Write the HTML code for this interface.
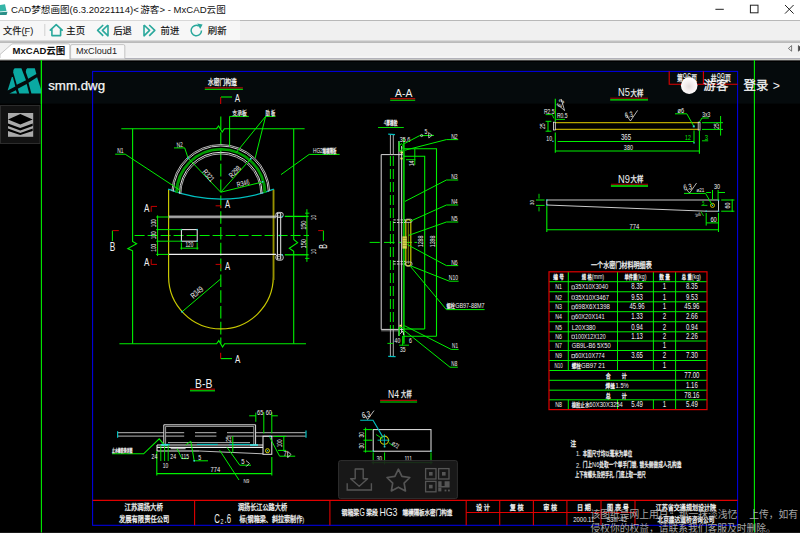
<!DOCTYPE html>
<html><head><meta charset="utf-8"><title>CAD</title>
<style>
html,body{margin:0;padding:0;background:#000;}
body{width:800px;height:533px;overflow:hidden;position:relative;font-family:"Liberation Sans","Noto Sans CJK SC",sans-serif;}
svg{display:block;position:absolute;left:0;top:0;}
svg text{font-family:"Liberation Sans","Noto Sans CJK SC",sans-serif;}
</style></head><body>
<svg width="800" height="533" viewBox="0 0 800 533">
<rect x="0" y="0" width="800" height="20.5" fill="#ffffff"/><rect x="0" y="20.5" width="800" height="21" fill="#f0f0f0"/><rect x="0" y="20.5" width="240" height="20" fill="#f7f7f7"/><rect x="0" y="40.6" width="800" height="1" fill="#b4b4b4"/><rect x="0" y="41.6" width="800" height="1" fill="#fbfbfb"/><rect x="0" y="42.6" width="800" height="17" fill="#f0f0f0"/><rect x="0" y="56" width="800" height="2" fill="#f4f4f4"/><rect x="0" y="58" width="800" height="1" fill="#b2b2ba"/><rect x="0" y="59" width="800" height="1" fill="#c8c8c4"/><path d="M0,5 L5,4.2 L6.5,11 L0,11.5 Z" stroke="none" stroke-width="0" fill="#35b5a8"/><path d="M0,12.3 L7.5,11.8 L6.5,15 L0,15 Z" stroke="none" stroke-width="0" fill="#2a8f88"/><g transform="translate(11.00,13.00)" fill="#111"><text x="0.00" y="0" font-size="9.59121">CAD</text><text x="20.25" y="0" font-size="9.59">梦想画图</text><text x="58.62" y="0" font-size="9.59121">(6.3.20221114)&lt;</text><text x="129.28" y="0" font-size="9.59">游客</text><text x="148.46" y="0" font-size="9.59121">&gt;&#160;-&#160;MxCAD</text><text x="195.62" y="0" font-size="9.59">云图</text></g><line x1="715.4" y1="9.3" x2="723.8" y2="9.3" stroke="#222" stroke-width="1"/><rect x="750.4" y="5.2" width="7.6" height="7.6" stroke="#222" stroke-width="1" fill="none"/><line x1="785" y1="5" x2="793.6" y2="13.6" stroke="#222" stroke-width="1"/><line x1="793.6" y1="5" x2="785" y2="13.6" stroke="#222" stroke-width="1"/><g transform="translate(2.90,34.20)" fill="#111"><text x="0" y="0" font-size="9.3" stroke="#111" stroke-width="0.15">文件</text><text x="18.60" y="0" font-size="9.3">(F)</text></g><line x1="22.5" y1="35.7" x2="27" y2="35.7" stroke="#111" stroke-width="0.7"/><rect x="44.3" y="24.5" width="1" height="1" fill="#a8a8a8"/><rect x="44.3" y="26.5" width="1" height="1" fill="#a8a8a8"/><rect x="44.3" y="28.5" width="1" height="1" fill="#a8a8a8"/><rect x="44.3" y="30.5" width="1" height="1" fill="#a8a8a8"/><rect x="44.3" y="32.5" width="1" height="1" fill="#a8a8a8"/><rect x="44.3" y="34.5" width="1" height="1" fill="#a8a8a8"/><path d="M50.3,30.2 L56.2,24.6 L62.2,30.2 M51.9,29.2 L51.9,35.6 L60.6,35.6 L60.6,29.2" stroke="#2aa89c" stroke-width="1.6" fill="none" stroke-linejoin="round" stroke-linecap="round"/><g transform="translate(66.30,34.20)" fill="#111"><text x="0" y="0" font-size="9.4" stroke="#111" stroke-width="0.15">主页</text></g><path d="M103.2,25 L97.6,30.4 L103.2,35.8 M108,25 L102.4,30.4 L108,35.8 L108,25" stroke="#2aa89c" stroke-width="1.6" fill="none" stroke-linejoin="round"/><g transform="translate(113.20,34.20)" fill="#111"><text x="0" y="0" font-size="9.4" stroke="#111" stroke-width="0.15">后退</text></g><path d="M144,25 L149.6,30.4 L144,35.8 L144,25 M149.2,25 L154.8,30.4 L149.2,35.8" stroke="#2aa89c" stroke-width="1.6" fill="none" stroke-linejoin="round"/><g transform="translate(160.50,34.20)" fill="#111"><text x="0" y="0" font-size="9.4" stroke="#111" stroke-width="0.15">前进</text></g><path d="M201.5,30.5 A5.2,5.2 0 1 1 198.8,26" stroke="#2aa89c" stroke-width="1.5" fill="none"/><path d="M197.2,23.6 L202.6,24.6 L200.2,29 Z" stroke="none" stroke-width="0" fill="#2aa89c"/><g transform="translate(207.80,34.20)" fill="#111"><text x="0" y="0" font-size="9.4" stroke="#111" stroke-width="0.15">刷新</text></g><path d="M0,54.5 L11.2,44.6 Q12,43.9 13,43.9 L68.2,43.9 Q69.8,43.9 69.8,45.5 L69.8,58.6 L0,58.6 Z" stroke="#b8b8b8" stroke-width="0.8" fill="#ffffff"/><rect x="0" y="58" width="69.4" height="1" fill="#ffffff"/><path d="M70.6,58.6 L70.6,46 Q70.6,44.6 72,44.6 L123.4,44.6 Q124.8,44.6 124.8,46 L124.8,58.6" stroke="#b8b8b8" stroke-width="0.8" fill="#f8f8f8"/><g transform="translate(12.60,54.00)" fill="#111"><text x="0.00" y="0" font-size="9.5" font-weight="bold">MxCAD</text><text x="33.78" y="0" font-size="9.5" font-weight="bold">云图</text></g><g transform="translate(76.00,54.00)" fill="#222"><text x="0.00" y="0" font-size="9.1">MxCloud1</text></g><path d="M791.6,45.6 L788.4,48.4 L791.6,51.2 Z" stroke="#444" stroke-width="0.7" fill="none"/><path d="M798.4,45.6 L801.6,48.4 L798.4,51.2 Z" stroke="#444" stroke-width="0.7" fill="#444"/><rect x="0" y="60" width="800" height="473" fill="#000000"/><rect x="0" y="60" width="800" height="43.6" fill="#050a0c"/><rect x="0" y="60" width="800" height="1" fill="#484848"/><rect x="0" y="61" width="800" height="1" fill="#000000"/><line x1="41.4" y1="60" x2="41.4" y2="533" stroke="#00f000" stroke-width="1.1"/><line x1="754.4" y1="60" x2="754.4" y2="533" stroke="#00f000" stroke-width="1.1"/><rect x="92.6" y="71.4" width="645" height="453.9" stroke="#0000e6" stroke-width="1.05" fill="none"/><line x1="92.6" y1="500.4" x2="737.6" y2="500.4" stroke="#e00000" stroke-width="1.1"/><line x1="194.6" y1="500.4" x2="194.6" y2="525.2" stroke="#e00000" stroke-width="1.1"/><line x1="329.9" y1="500.4" x2="329.9" y2="525.2" stroke="#e00000" stroke-width="1.1"/><line x1="466.2" y1="500.4" x2="466.2" y2="525.2" stroke="#e00000" stroke-width="1.1"/><line x1="499.7" y1="500.4" x2="499.7" y2="525.2" stroke="#e00000" stroke-width="1.1"/><line x1="533.4" y1="500.4" x2="533.4" y2="525.2" stroke="#e00000" stroke-width="1.1"/><line x1="566.9" y1="500.4" x2="566.9" y2="525.2" stroke="#e00000" stroke-width="1.1"/><line x1="601" y1="500.4" x2="601" y2="525.2" stroke="#e00000" stroke-width="1.1"/><line x1="635" y1="500.4" x2="635" y2="525.2" stroke="#e00000" stroke-width="1.1"/><line x1="466.2" y1="512.5" x2="635" y2="512.5" stroke="#e00000" stroke-width="1.1"/><g transform="translate(143.70,510.20) scale(0.84,1)" fill="#f0f0f0"><text x="-22.8" y="0" font-size="7.6" stroke="#f0f0f0" stroke-width="0.3">江苏润扬大桥</text></g><g transform="translate(144.20,521.80) scale(0.83,1)" fill="#f0f0f0"><text x="-30.4" y="0" font-size="7.6" stroke="#f0f0f0" stroke-width="0.3">发展有限责任公司</text></g><g transform="translate(262.50,510.20) scale(0.81,1)" fill="#f0f0f0"><text x="-30.4" y="0" font-size="7.6" stroke="#f0f0f0" stroke-width="0.3">润扬长江公路大桥</text></g><g transform="translate(214.20,523.40) scale(0.62,1)" fill="#f0f0f0"><text x="0.00" y="0" font-size="12.5">C</text></g><g transform="translate(220.60,523.80) scale(0.7,1)" fill="#f0f0f0"><text x="0.00" y="0" font-size="7.5">2</text></g><g transform="translate(224.60,523.40) scale(0.62,1)" fill="#f0f0f0"><text x="0.00" y="0" font-size="12.5">.6</text></g><g transform="translate(239.50,521.80) scale(0.8,1)" fill="#f0f0f0"><text x="0" y="0" font-size="7.6" stroke="#f0f0f0" stroke-width="0.3">标</text><text x="7.60" y="0" font-size="7.6">(</text><text x="10.13" y="0" font-size="7.6" stroke="#f0f0f0" stroke-width="0.3">钢箱梁、斜拉索制作</text><text x="78.53" y="0" font-size="7.6">)</text></g><g transform="translate(341.50,515.20) scale(0.8,1)" fill="#f0f0f0"><text x="0" y="0" font-size="7.4" stroke="#f0f0f0" stroke-width="0.3">钢箱梁</text></g><g transform="translate(359.60,516.20) scale(0.62,1)" fill="#f0f0f0"><text x="0.00" y="0" font-size="11">G</text></g><g transform="translate(366.20,515.20) scale(0.8,1)" fill="#f0f0f0"><text x="0" y="0" font-size="7.4" stroke="#f0f0f0" stroke-width="0.3">梁段</text></g><g transform="translate(379.40,516.20) scale(0.8,1)" fill="#f0f0f0"><text x="0.00" y="0" font-size="11">HG3</text></g><g transform="translate(402.40,515.20) scale(0.75,1)" fill="#f0f0f0"><text x="0" y="0" font-size="7.4" stroke="#f0f0f0" stroke-width="0.3">端横隔板水密门构造</text></g><g transform="translate(483.00,510.00) scale(0.85,1)" fill="#f0f0f0"><text x="-8.2" y="0" font-size="7.2" stroke="#f0f0f0" stroke-width="0.3">设</text><text x="-1.00" y="0" font-size="7.2">&#160;</text><text x="1" y="0" font-size="7.2" stroke="#f0f0f0" stroke-width="0.3">计</text></g><g transform="translate(516.60,510.00) scale(0.85,1)" fill="#f0f0f0"><text x="-8.2" y="0" font-size="7.2" stroke="#f0f0f0" stroke-width="0.3">复</text><text x="-1.00" y="0" font-size="7.2">&#160;</text><text x="1" y="0" font-size="7.2" stroke="#f0f0f0" stroke-width="0.3">核</text></g><g transform="translate(550.20,510.00) scale(0.85,1)" fill="#f0f0f0"><text x="-8.2" y="0" font-size="7.2" stroke="#f0f0f0" stroke-width="0.3">审</text><text x="-1.00" y="0" font-size="7.2">&#160;</text><text x="1" y="0" font-size="7.2" stroke="#f0f0f0" stroke-width="0.3">核</text></g><g transform="translate(584.00,510.00) scale(0.85,1)" fill="#f0f0f0"><text x="-8.2" y="0" font-size="7.2" stroke="#f0f0f0" stroke-width="0.3">日</text><text x="-1.00" y="0" font-size="7.2">&#160;</text><text x="1" y="0" font-size="7.2" stroke="#f0f0f0" stroke-width="0.3">期</text></g><g transform="translate(618.00,510.00) scale(0.85,1)" fill="#f0f0f0"><text x="-12.8" y="0" font-size="7.2" stroke="#f0f0f0" stroke-width="0.3">图</text><text x="-5.60" y="0" font-size="7.2">&#160;</text><text x="-3.6" y="0" font-size="7.2" stroke="#f0f0f0" stroke-width="0.3">表</text><text x="3.60" y="0" font-size="7.2">&#160;</text><text x="5.6" y="0" font-size="7.2" stroke="#f0f0f0" stroke-width="0.3">号</text></g><g transform="translate(584.00,521.80) scale(0.78,1)" fill="#f0f0f0"><text x="-13.74" y="0" font-size="7.6">2000.11</text></g><g transform="translate(606.40,521.80) scale(0.78,1)" fill="#f0f0f0"><text x="0.00" y="0" font-size="7.6">S3</text></g><g transform="translate(613.40,521.60) scale(0.7,1)" fill="#f0f0f0"><text x="0" y="0" font-size="6.4">Ⅲ</text></g><g transform="translate(618.60,521.80) scale(0.78,1)" fill="#f0f0f0"><text x="0.00" y="0" font-size="7.6">-42</text></g><g transform="translate(686.00,510.00) scale(0.84,1)" fill="#f0f0f0"><text x="-36" y="0" font-size="7.2" stroke="#f0f0f0" stroke-width="0.3">江苏省交通规划设计院</text></g><g transform="translate(686.00,521.60) scale(0.84,1)" fill="#f0f0f0"><text x="-34" y="0" font-size="6.8" stroke="#f0f0f0" stroke-width="0.3">北京建达道桥咨询公司</text></g><g transform="translate(222.40,84.80) scale(0.76,1)" fill="#f0f0f0"><text x="-19" y="0" font-size="7.6" stroke="#f0f0f0" stroke-width="0.3">水密门构造</text></g><line x1="204.8" y1="87.8" x2="242.9" y2="87.8" stroke="#a80808" stroke-width="1.2"/><line x1="204.8" y1="89.3" x2="242.9" y2="89.3" stroke="#00f000" stroke-width="1"/><line x1="220.7" y1="97" x2="220.7" y2="104" stroke="#e00000" stroke-width="1"/><line x1="221" y1="97" x2="232" y2="97" stroke="#00f000" stroke-width="1.1"/><g transform="translate(237.40,101.60) scale(0.7,1)" fill="#f0f0f0"><text x="-3.80" y="0" font-size="11.4">A</text></g><line x1="220.7" y1="352.8" x2="220.7" y2="358.8" stroke="#e00000" stroke-width="1"/><line x1="221" y1="358.6" x2="232" y2="358.6" stroke="#00f000" stroke-width="1.1"/><g transform="translate(237.60,362.80) scale(0.7,1)" fill="#f0f0f0"><text x="-3.80" y="0" font-size="11.4">A</text></g><line x1="220.8" y1="116.4" x2="220.8" y2="343.6" stroke="#00f000" stroke-width="1.1" stroke-dasharray="12.6 3.2"/><line x1="134.6" y1="235.5" x2="309" y2="235.5" stroke="#00f000" stroke-width="1.1" stroke-dasharray="10 3"/><path d="M121.3,128.7 L216.6,128.7 L218.6,126 L222.2,132 L224.4,128.7 L304.6,128.7" stroke="#00f000" stroke-width="1.1" fill="none"/><path d="M119.4,343.8 L216.6,343.8 L218.8,340.6 L222.6,347 L224.6,343.8 L306,343.8" stroke="#00f000" stroke-width="1.1" fill="none"/><path d="M132.6,128.7 L132.6,241.4 L136.6,243.8 L127.8,248.6 L132.6,250.8 L132.6,343.8" stroke="#00f000" stroke-width="1.1" fill="none"/><path d="M293.7,128.7 L293.7,239.4 L297.6,242.6 L289.3,248.3 L293.7,251.2 L293.7,343.8" stroke="#00f000" stroke-width="1.1" fill="none"/><path d="M168.6,189.6 L168.6,276.6 A52.35,52.35 0 0 0 273.3,276.6 L273.3,189.6" stroke="#c8c800" stroke-width="1.2" fill="none"/><line x1="273.9" y1="189.6" x2="273.9" y2="280" stroke="#8c8400" stroke-width="1.2"/><path d="M168.2,189.2 A146,146 0 0 0 273.8,189.2" stroke="#00c0c0" stroke-width="1.3" fill="none"/><path d="M171.86,191.12 A49,49 0 0 1 269.74,191.12" stroke="#b4b4b4" stroke-width="1" fill="none"/><path d="M173.24,191.61 A47.6,47.6 0 0 1 268.36,191.61" stroke="#c8c8c8" stroke-width="1" fill="none"/><path d="M176.61,192.67 A44.2,44.2 0 0 1 264.99,192.67" stroke="#008a00" stroke-width="2.2" fill="none"/><path d="M175.52,192.34 A45.3,45.3 0 0 1 266.08,192.34" stroke="#00c400" stroke-width="0.6" fill="none"/><path d="M177.70,193.00 A43.1,43.1 0 0 1 263.90,193.00" stroke="#00c400" stroke-width="0.6" fill="none"/><path d="M179.50,193.60 A41.3,41.3 0 0 1 262.10,193.60" stroke="#e0e0e0" stroke-width="1" fill="none"/><path d="M180.80,193.95 A40,40 0 0 1 260.80,193.95" stroke="#c0c0c0" stroke-width="0.9" fill="none"/><path d="M220.8,192.3 L188.1,158.1 L184.7,147.9 L174,147.9" stroke="#00f000" stroke-width="1" fill="none"/><line x1="220.8" y1="192.2" x2="250.6" y2="159" stroke="#00f000" stroke-width="1"/><line x1="220.8" y1="192.2" x2="262.4" y2="182" stroke="#00f000" stroke-width="1"/><g transform="translate(180.20,147.00) rotate(-8) scale(0.7,1)" fill="#f0f0f0"><text x="-4.47" y="0" font-size="7">N2</text></g><g transform="translate(206.40,177.20) rotate(49) scale(0.72,1)" fill="#f0f0f0"><text x="-9.32" y="0" font-size="7.8">R321</text></g><g transform="translate(236.80,173.60) rotate(-48) scale(0.72,1)" fill="#f0f0f0"><text x="-9.32" y="0" font-size="7.8">R298</text></g><g transform="translate(243.60,185.80) rotate(-14) scale(0.72,1)" fill="#f0f0f0"><text x="-8.85" y="0" font-size="7.4">R346</text></g><rect x="187.3" y="157.3" width="1.6" height="1.6" fill="#30d0d0"/><rect x="250" y="158" width="1.6" height="1.6" fill="#30d0d0"/><rect x="261.8" y="181" width="1.6" height="1.6" fill="#30d0d0"/><path d="M115.2,154.2 L125.2,154.2 L180.6,190.6" stroke="#00f000" stroke-width="1" fill="none"/><g transform="translate(120.40,153.40) scale(0.7,1)" fill="#f0f0f0"><text x="-4.47" y="0" font-size="7">N1</text></g><path d="M248.8,116.4 L229.6,116.4 L229.6,146.4" stroke="#00f000" stroke-width="1" fill="none"/><g transform="translate(239.60,115.00) scale(0.9,1)" fill="#f0f0f0"><text x="-8.1" y="0" font-size="5.4" stroke="#f0f0f0" stroke-width="0.2">支承板</text></g><line x1="265.6" y1="116.4" x2="275.4" y2="116.4" stroke="#00f000" stroke-width="1"/><line x1="265.6" y1="116.4" x2="236.2" y2="152.6" stroke="#00f000" stroke-width="1"/><line x1="265.6" y1="116.4" x2="255.2" y2="158" stroke="#00f000" stroke-width="1"/><g transform="translate(270.40,115.00) scale(0.8,1)" fill="#f0f0f0"><text x="-6.15" y="0" font-size="5.4" stroke="#f0f0f0" stroke-width="0.2">肋</text><text x="-0.75" y="0" font-size="5.4">&#160;</text><text x="0.75" y="0" font-size="5.4" stroke="#f0f0f0" stroke-width="0.2">板</text></g><path d="M339.6,154.4 L309.2,154.4 L281,174.6" stroke="#00f000" stroke-width="1" fill="none"/><g transform="translate(313.00,153.20) scale(0.66,1)" fill="#f0f0f0"><text x="0.00" y="0" font-size="7.2">HG2</text></g><g transform="translate(322.60,153.00) scale(0.62,1)" fill="#f0f0f0"><text x="0" y="0" font-size="5.6" stroke="#f0f0f0" stroke-width="0.25">端横隔板</text></g><line x1="168.6" y1="216.2" x2="276" y2="216.2" stroke="#f0f0f0" stroke-width="1"/><line x1="168.6" y1="217.7" x2="276" y2="217.7" stroke="#d0d0d0" stroke-width="0.9"/><line x1="168.6" y1="254.4" x2="276" y2="254.4" stroke="#f0f0f0" stroke-width="1.2"/><line x1="277.4" y1="213" x2="277.4" y2="259.6" stroke="#e8e8e8" stroke-width="1"/><line x1="280.7" y1="213" x2="280.7" y2="259.6" stroke="#e8e8e8" stroke-width="1"/><rect x="275.9" y="212.4" width="7.3" height="5" stroke="#e0e0e0" stroke-width="0.9" fill="none" rx="2.2"/><rect x="275.9" y="254.6" width="7.3" height="5.6" stroke="#e0e0e0" stroke-width="0.9" fill="none" rx="2.2"/><circle cx="279.1" cy="214.8" r="1.5" stroke="#d0d0d0" stroke-width="0.7" fill="none"/><circle cx="279.1" cy="257.6" r="1.5" stroke="#d0d0d0" stroke-width="0.7" fill="none"/><rect x="281.6" y="215.8" width="1.4" height="1.4" fill="#30d0d0"/><rect x="281.6" y="254.2" width="1.4" height="1.4" fill="#30d0d0"/><rect x="279.2" y="234.8" width="1.4" height="1.4" fill="#30d0d0"/><rect x="181.4" y="229.6" width="15.8" height="11.6" stroke="#f0f0f0" stroke-width="1" fill="none"/><rect x="180.7" y="228.9" width="1.4" height="1.4" fill="#30d0d0"/><rect x="196.5" y="228.9" width="1.4" height="1.4" fill="#30d0d0"/><rect x="180.7" y="240.5" width="1.4" height="1.4" fill="#30d0d0"/><rect x="196.5" y="240.5" width="1.4" height="1.4" fill="#30d0d0"/><line x1="181.4" y1="242.6" x2="181.4" y2="249.6" stroke="#00f000" stroke-width="1"/><line x1="197.2" y1="242.6" x2="197.2" y2="249.6" stroke="#00f000" stroke-width="1"/><line x1="180.4" y1="248.2" x2="198.4" y2="248.2" stroke="#00f000" stroke-width="1"/><g transform="translate(189.40,247.20) scale(0.74,1)" fill="#f0f0f0"><text x="-5.34" y="0" font-size="6.4">120</text></g><line x1="157.6" y1="215.4" x2="157.6" y2="256" stroke="#00f000" stroke-width="1"/><line x1="156.2" y1="217" x2="168.6" y2="217" stroke="#00f000" stroke-width="1"/><line x1="156.2" y1="229.6" x2="168.6" y2="229.6" stroke="#00f000" stroke-width="1"/><line x1="156.2" y1="241.2" x2="168.6" y2="241.2" stroke="#00f000" stroke-width="1"/><line x1="156.2" y1="254.4" x2="168.6" y2="254.4" stroke="#00f000" stroke-width="1"/><line x1="168.6" y1="229.6" x2="181.4" y2="229.6" stroke="#00f000" stroke-width="0.9"/><line x1="168.6" y1="241.2" x2="181.4" y2="241.2" stroke="#00f000" stroke-width="0.9"/><g transform="translate(156.40,223.20) rotate(-90) scale(0.72,1)" fill="#f0f0f0"><text x="-5.51" y="0" font-size="6.6">100</text></g><g transform="translate(156.40,235.40) rotate(-90) scale(0.72,1)" fill="#f0f0f0"><text x="-5.51" y="0" font-size="6.6">100</text></g><g transform="translate(156.40,247.80) rotate(-90) scale(0.72,1)" fill="#f0f0f0"><text x="-5.51" y="0" font-size="6.6">100</text></g><line x1="306.9" y1="209.2" x2="306.9" y2="261.8" stroke="#00f000" stroke-width="1"/><line x1="284.8" y1="216.4" x2="308.6" y2="216.4" stroke="#00f000" stroke-width="1.3"/><line x1="284.8" y1="254.8" x2="308.6" y2="254.8" stroke="#00f000" stroke-width="1.3"/><line x1="305" y1="213.2" x2="309.4" y2="213.2" stroke="#00f000" stroke-width="0.9"/><line x1="305" y1="258.4" x2="309.4" y2="258.4" stroke="#00f000" stroke-width="0.9"/><g transform="translate(305.80,225.20) rotate(-90) scale(0.7,1)" fill="#f0f0f0"><text x="-6.67" y="0" font-size="8">150</text></g><g transform="translate(305.80,243.80) rotate(-90) scale(0.7,1)" fill="#f0f0f0"><text x="-6.67" y="0" font-size="8">150</text></g><g transform="translate(315.80,217.60) rotate(-90) scale(0.72,1)" fill="#f0f0f0"><text x="-3.56" y="0" font-size="6.4">10</text></g><g transform="translate(315.80,251.60) rotate(-90) scale(0.72,1)" fill="#f0f0f0"><text x="-3.56" y="0" font-size="6.4">10</text></g><g transform="translate(146.80,212.40) scale(0.7,1)" fill="#f0f0f0"><text x="-3.87" y="0" font-size="11.6">A</text></g><path d="M151.2,211.8 L151.2,206.4 L157,206.4" stroke="#e00000" stroke-width="0.9" fill="none"/><g transform="translate(146.80,266.00) scale(0.7,1)" fill="#f0f0f0"><text x="-3.87" y="0" font-size="11.6">A</text></g><path d="M151.2,259.2 L151.2,264.4 L157,264.4" stroke="#e00000" stroke-width="0.9" fill="none"/><g transform="translate(227.60,208.20) scale(0.7,1)" fill="#f0f0f0"><text x="-3.67" y="0" font-size="11">A</text></g><path d="M215.6,205.8 L220.8,205.8 L220.8,208.4" stroke="#e00000" stroke-width="0.9" fill="none"/><g transform="translate(227.60,270.40) scale(0.7,1)" fill="#f0f0f0"><text x="-3.67" y="0" font-size="11">A</text></g><path d="M215.6,264.4 L220.8,264.4 L220.8,268.6" stroke="#e00000" stroke-width="0.9" fill="none"/><line x1="112.4" y1="230.6" x2="112.4" y2="241" stroke="#00f000" stroke-width="1"/><line x1="112.6" y1="230.6" x2="118.8" y2="230.6" stroke="#e00000" stroke-width="0.9"/><g transform="translate(112.40,251.00) scale(0.66,1)" fill="#f0f0f0"><text x="-4.20" y="0" font-size="12.6">B</text></g><line x1="323.4" y1="230.6" x2="323.4" y2="240.8" stroke="#00f000" stroke-width="1"/><line x1="318.2" y1="230.6" x2="323.2" y2="230.6" stroke="#e00000" stroke-width="0.9"/><g transform="translate(327.00,246.40) rotate(-90) scale(0.7,1)" fill="#f0f0f0"><text x="-3.33" y="0" font-size="10">B</text></g><line x1="220.8" y1="278.8" x2="182" y2="311.8" stroke="#00f000" stroke-width="1"/><rect x="181.2" y="311" width="1.6" height="1.6" fill="#30d0d0"/><g transform="translate(198.70,294.60) rotate(-40) scale(0.7,1)" fill="#f0f0f0"><text x="-9.80" y="0" font-size="8.2">R349</text></g><g transform="translate(403.70,97.00) scale(0.88,1)" fill="#f0f0f0"><text x="-9.84" y="0" font-size="11.8">A-A</text></g><line x1="390.2" y1="98.7" x2="415.2" y2="98.7" stroke="#a80808" stroke-width="1.5"/><line x1="390.2" y1="100.3" x2="415.2" y2="100.3" stroke="#00f000" stroke-width="0.9"/><g transform="translate(390.60,125.40) scale(0.66,1)" fill="#f0f0f0"><text x="-10.35" y="0" font-size="7">4</text><text x="-6.45" y="0" font-size="5.6" stroke="#f0f0f0" stroke-width="0.25">厚橡胶</text></g><line x1="378" y1="127.5" x2="403.8" y2="127.5" stroke="#00f000" stroke-width="0.9"/><path d="M381.2,329.4 L381.2,154.6 L402.6,154.6" stroke="#d8d8d8" stroke-width="1" fill="none"/><line x1="381.2" y1="329.4" x2="404" y2="329.4" stroke="#d8d8d8" stroke-width="1"/><line x1="381.2" y1="330.8" x2="398" y2="330.8" stroke="#a0a0a0" stroke-width="0.8"/><line x1="390.4" y1="134.4" x2="390.4" y2="154.6" stroke="#c0c0c0" stroke-width="0.9"/><line x1="393.3" y1="134.4" x2="393.3" y2="154.6" stroke="#c0c0c0" stroke-width="0.9"/><line x1="388.2" y1="134.2" x2="395" y2="134.6" stroke="#00c0c0" stroke-width="1.2"/><line x1="390.4" y1="329.4" x2="390.4" y2="356" stroke="#c0c0c0" stroke-width="0.9"/><line x1="393.3" y1="329.4" x2="393.3" y2="356" stroke="#c0c0c0" stroke-width="0.9"/><line x1="388.2" y1="356.4" x2="395.6" y2="356.6" stroke="#00c0c0" stroke-width="1.2"/><line x1="390.4" y1="156" x2="390.4" y2="329" stroke="#00f000" stroke-width="1" stroke-dasharray="10 3"/><line x1="393.3" y1="156" x2="393.3" y2="329" stroke="#00f000" stroke-width="1" stroke-dasharray="10 3"/><line x1="398.9" y1="141" x2="398.9" y2="336" stroke="#d8d8d8" stroke-width="1"/><line x1="401.7" y1="146" x2="401.7" y2="332" stroke="#e8e8e8" stroke-width="1"/><line x1="403.9" y1="138.6" x2="403.9" y2="343.8" stroke="#00f000" stroke-width="1.4"/><path d="M399.2,141.6 L399.2,150.8 L402.6,150.8" stroke="#00f000" stroke-width="1.2" fill="none"/><path d="M399.4,146 L401.4,143.4 L403.4,146.4 L401.6,149.6" stroke="#00f000" stroke-width="0.9" fill="none"/><rect x="400.4" y="151.6" width="2.6" height="1.8" fill="#e8e870"/><rect x="400.4" y="157.6" width="2.2" height="1.8" fill="#e8e870"/><path d="M399.2,336 L399.2,327.6 L402.6,327.6" stroke="#00f000" stroke-width="1.2" fill="none"/><rect x="399.4" y="324.8" width="2.6" height="1.8" fill="#e8e870"/><path d="M400,333.8 L402.8,331.2 L403.8,335" stroke="#e8e8e8" stroke-width="0.9" fill="none"/><path d="M404,156.3 L424.7,156.3 L424.7,329" stroke="#00f000" stroke-width="1.1" fill="none"/><line x1="404" y1="329" x2="424.7" y2="329" stroke="#00f000" stroke-width="1.1"/><path d="M404,148.8 L436.5,148.8 L436.5,336.2" stroke="#00f000" stroke-width="1.1" fill="none"/><line x1="404" y1="336.2" x2="436.5" y2="336.2" stroke="#00f000" stroke-width="1.1"/><line x1="414.8" y1="149" x2="414.8" y2="156.4" stroke="#00f000" stroke-width="1"/><g transform="translate(423.00,241.40) rotate(-90) scale(0.72,1)" fill="#f0f0f0"><text x="-8.23" y="0" font-size="7.4">1288</text></g><g transform="translate(434.80,241.40) rotate(-90) scale(0.72,1)" fill="#f0f0f0"><text x="-8.23" y="0" font-size="7.4">1398</text></g><g transform="translate(413.60,163.40) rotate(-90) scale(0.7,1)" fill="#f0f0f0"><text x="-4.23" y="0" font-size="7.6">14</text></g><line x1="406" y1="159.7" x2="415.4" y2="159.7" stroke="#00f000" stroke-width="0.9"/><line x1="414.8" y1="156.4" x2="414.8" y2="165" stroke="#00f000" stroke-width="0.9"/><g transform="translate(405.00,141.60) scale(0.7,1)" fill="#f0f0f0"><text x="-7.59" y="0" font-size="7.8">35.6</text></g><path d="M404.4,143.6 L419.5,135.7 L434,135.4" stroke="#00f000" stroke-width="1" fill="none"/><circle cx="421.6" cy="135.5" r="1.1" stroke="#e0e0e0" stroke-width="0.7" fill="none"/><g transform="translate(426.00,133.60) scale(0.75,1)" fill="#f0f0f0"><text x="-1.95" y="0" font-size="7">5</text></g><path d="M428.6,132.6 L432.2,135.3 L428.8,138 Z" stroke="#e8e8e8" stroke-width="0.7" fill="none"/><line x1="369.6" y1="242.4" x2="379.8" y2="242.4" stroke="#00f000" stroke-width="1"/><line x1="384" y1="242.4" x2="394.6" y2="242.4" stroke="#00f000" stroke-width="1"/><line x1="398.6" y1="242.4" x2="401" y2="242.4" stroke="#00f000" stroke-width="1"/><line x1="404" y1="242.4" x2="412" y2="242.4" stroke="#00f000" stroke-width="1"/><line x1="414.4" y1="242.4" x2="417" y2="242.4" stroke="#00f000" stroke-width="1"/><rect x="405.8" y="219.6" width="5" height="46.2" stroke="#c8c800" stroke-width="1.2" fill="none" rx="2.2"/><line x1="408.3" y1="222" x2="408.3" y2="264" stroke="#a8a000" stroke-width="0.8"/><rect x="402.4" y="236.4" width="4.4" height="12.2" fill="#d8d850"/><line x1="402.4" y1="238.4" x2="406.8" y2="238.4" stroke="#808020" stroke-width="0.6"/><line x1="402.4" y1="240.8" x2="406.8" y2="240.8" stroke="#808020" stroke-width="0.6"/><line x1="402.4" y1="243.2" x2="406.8" y2="243.2" stroke="#808020" stroke-width="0.6"/><line x1="402.4" y1="245.6" x2="406.8" y2="245.6" stroke="#808020" stroke-width="0.6"/><line x1="393.3" y1="219.9" x2="405.6" y2="219.9" stroke="#e0e0e0" stroke-width="0.9" stroke-dasharray="2.4 1.2"/><line x1="393.3" y1="222.5" x2="405.6" y2="222.5" stroke="#e0e0e0" stroke-width="0.9" stroke-dasharray="2.4 1.2"/><line x1="393.3" y1="261.4" x2="405.6" y2="261.4" stroke="#e0e0e0" stroke-width="0.9" stroke-dasharray="2.4 1.2"/><line x1="393.3" y1="264" x2="405.6" y2="264" stroke="#e0e0e0" stroke-width="0.9" stroke-dasharray="2.4 1.2"/><rect x="405.4" y="219.2" width="6.6" height="3.2" stroke="#d0d0d0" stroke-width="0.8" fill="none" rx="1.4"/><rect x="405.4" y="262" width="6.6" height="4" stroke="#d0d0d0" stroke-width="0.8" fill="none" rx="1.6"/><g transform="translate(457.60,138.60) scale(0.72,1)" fill="#f0f0f0"><text x="-8.95" y="0" font-size="7">N2</text></g><path d="M458.2,139.6 L446.4,139.6 L405,150.2" stroke="#00f000" stroke-width="1" fill="none"/><g transform="translate(457.60,179.00) scale(0.72,1)" fill="#f0f0f0"><text x="-8.95" y="0" font-size="7">N3</text></g><path d="M458.2,180 L446.4,180 L405,201.4" stroke="#00f000" stroke-width="1" fill="none"/><g transform="translate(457.60,204.00) scale(0.72,1)" fill="#f0f0f0"><text x="-8.95" y="0" font-size="7">N4</text></g><path d="M458.2,205 L446.4,205 L410.4,221.2" stroke="#00f000" stroke-width="1" fill="none"/><g transform="translate(457.60,221.00) scale(0.72,1)" fill="#f0f0f0"><text x="-8.95" y="0" font-size="7">N5</text></g><path d="M458.2,222 L446.4,222 L408.6,235.4" stroke="#00f000" stroke-width="1" fill="none"/><g transform="translate(457.60,264.60) scale(0.72,1)" fill="#f0f0f0"><text x="-8.95" y="0" font-size="7">N6</text></g><path d="M458.2,265.6 L446.4,265.6 L407.4,244.6" stroke="#00f000" stroke-width="1" fill="none"/><g transform="translate(458.00,280.20) scale(0.72,1)" fill="#f0f0f0"><text x="-12.84" y="0" font-size="7">N10</text></g><path d="M458.6,281.2 L449.4,281.2 L411,266" stroke="#00f000" stroke-width="1" fill="none"/><g transform="translate(465.60,308.20) scale(0.72,1)" fill="#f0f0f0"><text x="-26.42" y="0" font-size="5.93" stroke="#f0f0f0" stroke-width="0.25">螺栓</text><text x="-14.56" y="0" font-size="7.6">GB97-88M7</text></g><path d="M484.6,309.6 L446.4,309.6 L410.4,266.4" stroke="#00f000" stroke-width="1" fill="none"/><g transform="translate(458.00,348.40) scale(0.72,1)" fill="#f0f0f0"><text x="-8.18" y="0" font-size="6.4">N1</text></g><path d="M458.6,349.4 L451.2,349.4 L404.4,325.6" stroke="#00f000" stroke-width="1" fill="none"/><g transform="translate(457.20,366.20) scale(0.72,1)" fill="#f0f0f0"><text x="-8.18" y="0" font-size="6.4">N8</text></g><path d="M457.8,367.2 L450,367.2 L404.4,330.6" stroke="#00f000" stroke-width="1" fill="none"/><g transform="translate(397.40,343.20) scale(0.72,1)" fill="#f0f0f0"><text x="-3.89" y="0" font-size="7">40</text></g><g transform="translate(410.40,343.20) scale(0.75,1)" fill="#f0f0f0"><text x="-1.95" y="0" font-size="7">6</text></g><g transform="translate(402.80,351.80) scale(0.72,1)" fill="#f0f0f0"><text x="-3.89" y="0" font-size="7">35</text></g><line x1="387.4" y1="343.4" x2="393.3" y2="343.4" stroke="#00f000" stroke-width="0.9"/><line x1="399.2" y1="345.2" x2="409" y2="345.2" stroke="#00f000" stroke-width="0.9"/><line x1="402.6" y1="336" x2="402.6" y2="345.4" stroke="#00f000" stroke-width="0.9"/><g transform="translate(203.70,387.80) scale(0.8,1)" fill="#f0f0f0"><text x="-10.84" y="0" font-size="13">B-B</text></g><line x1="190" y1="389.2" x2="215" y2="389.2" stroke="#a80808" stroke-width="1.2"/><line x1="190" y1="390.8" x2="215" y2="390.8" stroke="#00f000" stroke-width="1.1"/><line x1="117.8" y1="432.7" x2="163.8" y2="432.7" stroke="#b8b8b8" stroke-width="1"/><line x1="165.6" y1="432.7" x2="184.2" y2="432.7" stroke="#b8b8b8" stroke-width="1"/><line x1="195" y1="432.7" x2="216.4" y2="432.7" stroke="#b8b8b8" stroke-width="1"/><line x1="227" y1="432.7" x2="253.6" y2="432.7" stroke="#b8b8b8" stroke-width="1"/><line x1="255.6" y1="432.7" x2="305.8" y2="432.7" stroke="#b8b8b8" stroke-width="1"/><line x1="117.8" y1="436.1" x2="163.8" y2="436.1" stroke="#b8b8b8" stroke-width="1"/><line x1="165.6" y1="436.1" x2="184.2" y2="436.1" stroke="#b8b8b8" stroke-width="1"/><line x1="195" y1="436.1" x2="216.4" y2="436.1" stroke="#b8b8b8" stroke-width="1"/><line x1="227" y1="436.1" x2="253.6" y2="436.1" stroke="#b8b8b8" stroke-width="1"/><line x1="255.6" y1="436.1" x2="305.8" y2="436.1" stroke="#b8b8b8" stroke-width="1"/><line x1="117.6" y1="431.2" x2="117.6" y2="437.8" stroke="#00c0c0" stroke-width="1.2"/><line x1="306" y1="430.4" x2="306" y2="437.8" stroke="#00c0c0" stroke-width="1.2"/><path d="M163.8,444 L163.8,424.8 L255.6,424.8 L255.6,445" stroke="#e0e0e0" stroke-width="1" fill="none"/><path d="M165.6,444 L165.6,426.4 L253.8,426.4 L253.8,445" stroke="#c8c8c8" stroke-width="0.8" fill="none"/><path d="M263,445 L157,445 L157,451 L199,451" stroke="#f0f0f0" stroke-width="1" fill="none"/><line x1="157" y1="447.4" x2="263" y2="447.4" stroke="#f0f0f0" stroke-width="1.1"/><line x1="199" y1="451" x2="263" y2="453.8" stroke="#d0d0d0" stroke-width="0.9"/><line x1="168" y1="442.6" x2="250" y2="442.6" stroke="#c0c0c0" stroke-width="0.9"/><line x1="170.6" y1="448.6" x2="185.6" y2="448.6" stroke="#a8a8a8" stroke-width="1.4"/><line x1="160.8" y1="444.4" x2="170" y2="444.4" stroke="#00c0c0" stroke-width="1.1"/><line x1="196.8" y1="444.4" x2="217.8" y2="444.4" stroke="#00c0c0" stroke-width="1.1"/><line x1="229.2" y1="444.4" x2="249.6" y2="444.4" stroke="#00c0c0" stroke-width="1.1"/><line x1="160.8" y1="445" x2="168" y2="445" stroke="#40e8e8" stroke-width="1.6"/><line x1="250" y1="445" x2="258" y2="445" stroke="#40e8e8" stroke-width="1.6"/><rect x="263" y="436.2" width="8.8" height="18.1" stroke="#e8e8e8" stroke-width="1" fill="none"/><circle cx="267.5" cy="450.7" r="2" stroke="#d8d800" stroke-width="1" fill="none"/><rect x="266.9" y="450.1" width="1.2" height="1.2" fill="#30d0d0"/><rect x="269.4" y="435.8" width="1.4" height="1.4" fill="#30d0d0"/><path d="M112,453.8 L143.6,453.8 L159.2,438.8 L163.6,444.2" stroke="#00f000" stroke-width="1.1" fill="none"/><g transform="translate(122.20,452.40) scale(0.58,1)" fill="#f0f0f0"><text x="-17.5" y="0" font-size="5" stroke="#f0f0f0" stroke-width="0.3">止水橡胶条详图</text></g><line x1="160.8" y1="445.4" x2="160.8" y2="461" stroke="#00f000" stroke-width="0.9"/><line x1="164.6" y1="445.4" x2="164.6" y2="461" stroke="#00f000" stroke-width="0.9"/><line x1="168.2" y1="445.4" x2="168.2" y2="461" stroke="#00f000" stroke-width="0.9"/><line x1="156.8" y1="451" x2="156.8" y2="475.4" stroke="#00f000" stroke-width="1.1"/><g transform="translate(154.40,458.80) scale(0.7,1)" fill="#f0f0f0"><text x="-4.12" y="0" font-size="7.4">24</text></g><g transform="translate(173.20,458.80) scale(0.7,1)" fill="#f0f0f0"><text x="-4.12" y="0" font-size="7.4">24</text></g><g transform="translate(165.40,467.80) scale(0.7,1)" fill="#f0f0f0"><text x="-3.89" y="0" font-size="7">10</text></g><path d="M177.2,448.8 L181.8,458.6 L188.4,458.6" stroke="#00f000" stroke-width="1" fill="none"/><g transform="translate(185.20,458.60) scale(0.68,1)" fill="#f0f0f0"><text x="-6.01" y="0" font-size="7.2">115</text></g><path d="M185.6,445 L190.8,441.2 L194.2,460.8 L208,460.8" stroke="#00f000" stroke-width="1" fill="none"/><rect x="193.4" y="460" width="1.6" height="1.6" fill="#30d0d0"/><g transform="translate(199.60,460.00) scale(0.8,1)" fill="#f0f0f0"><text x="-1.84" y="0" font-size="6.6">5</text></g><line x1="156.8" y1="473.6" x2="271.8" y2="473.6" stroke="#00f000" stroke-width="1.1"/><line x1="271.8" y1="457" x2="271.8" y2="475.4" stroke="#00f000" stroke-width="1.1"/><g transform="translate(215.40,472.20) scale(0.76,1)" fill="#f0f0f0"><text x="-6.34" y="0" font-size="7.6">774</text></g><line x1="232.8" y1="436" x2="232.8" y2="452.6" stroke="#00f000" stroke-width="1"/><g transform="translate(231.40,439.20) rotate(-90) scale(0.72,1)" fill="#f0f0f0"><text x="-3.89" y="0" font-size="7">25</text></g><path d="M227,447.4 L239.8,465.2 L251,465.2" stroke="#00f000" stroke-width="1" fill="none"/><g transform="translate(243.00,464.20) scale(0.8,1)" fill="#f0f0f0"><text x="-2.06" y="0" font-size="7.4">5</text></g><path d="M246,460.6 L249.4,463.4 L246.2,466.6" stroke="#e8e8e8" stroke-width="0.8" fill="none"/><line x1="219.6" y1="450.2" x2="239" y2="480" stroke="#00f000" stroke-width="1"/><g transform="translate(246.40,483.40) scale(0.72,1)" fill="#f0f0f0"><text x="-3.96" y="0" font-size="6.2">N9</text></g><line x1="249.2" y1="415.8" x2="255.8" y2="415.8" stroke="#00f000" stroke-width="1"/><line x1="271.8" y1="415.8" x2="277.8" y2="415.8" stroke="#00f000" stroke-width="1"/><line x1="255.8" y1="412.6" x2="255.8" y2="421.8" stroke="#00f000" stroke-width="1"/><line x1="263.8" y1="412.2" x2="263.8" y2="433.4" stroke="#00f000" stroke-width="1"/><line x1="271.8" y1="412.2" x2="271.8" y2="433.4" stroke="#00f000" stroke-width="1"/><g transform="translate(260.20,414.80) scale(0.72,1)" fill="#f0f0f0"><text x="-4.34" y="0" font-size="7.8">65</text></g><g transform="translate(268.80,414.80) scale(0.72,1)" fill="#f0f0f0"><text x="-4.34" y="0" font-size="7.8">60</text></g><line x1="283.8" y1="436" x2="283.8" y2="450.4" stroke="#00f000" stroke-width="1"/><line x1="273.6" y1="436.4" x2="286.2" y2="436.4" stroke="#00f000" stroke-width="1"/><line x1="278" y1="450.4" x2="286.2" y2="450.4" stroke="#00f000" stroke-width="1"/><g transform="translate(282.40,443.40) rotate(-90) scale(0.7,1)" fill="#f0f0f0"><text x="-5.51" y="0" font-size="6.6">100</text></g><path d="M269.8,437.4 L279.6,456.2 L295.2,456.2" stroke="#00f000" stroke-width="1" fill="none"/><g transform="translate(285.20,455.80) scale(0.8,1)" fill="#f0f0f0"><text x="-2.11" y="0" font-size="7.6">7</text></g><path d="M287.6,451.4 L291,454.4 L287.8,457.6 Z" stroke="#e8e8e8" stroke-width="0.8" fill="none"/><g transform="translate(393.50,398.30) scale(0.74,1)" fill="#f0f0f0"><text x="-7.41" y="0" font-size="11.6">N4</text></g><g transform="translate(406.40,397.40) scale(0.68,1)" fill="#f0f0f0"><text x="-7.8" y="0" font-size="7.8" stroke="#f0f0f0" stroke-width="0.3">大样</text></g><line x1="380.1" y1="400.4" x2="417.1" y2="400.4" stroke="#a80808" stroke-width="1.2"/><line x1="380.1" y1="402" x2="417.1" y2="402" stroke="#00f000" stroke-width="1.2"/><rect x="373.2" y="429.6" width="57.8" height="21.6" stroke="#e8e8e8" stroke-width="1" fill="none"/><circle cx="384.4" cy="440.2" r="4.1" stroke="#d8d000" stroke-width="1.1" fill="none"/><line x1="377.6" y1="440.2" x2="389.6" y2="440.2" stroke="#00c0c0" stroke-width="0.9"/><line x1="384.4" y1="434.2" x2="384.4" y2="447.2" stroke="#00c0c0" stroke-width="0.9"/><line x1="376.2" y1="434.6" x2="382.6" y2="438.8" stroke="#00f000" stroke-width="0.9"/><line x1="388.8" y1="442.6" x2="393.4" y2="446.2" stroke="#00f000" stroke-width="0.9"/><rect x="383.8" y="445.8" width="1.6" height="1.6" fill="#30d0d0"/><rect x="430.2" y="450.4" width="1.4" height="1.4" fill="#30d0d0"/><rect x="372.6" y="450.4" width="1.4" height="1.4" fill="#30d0d0"/><path d="M360.2,420.2 L373,420.2 L383.2,437.6" stroke="#00c0c0" stroke-width="1.1" fill="none"/><g transform="translate(366.60,417.40) rotate(-12) scale(0.72,1)" fill="#f0f0f0"><text x="-5.84" y="0" font-size="8.4">6.3</text></g><path d="M364.4,414.6 L367.6,419.4 L374,410.6" stroke="#e8e8e8" stroke-width="0.8" fill="none"/><g transform="translate(394.40,446.60) rotate(35) scale(0.72,1)" fill="#f0f0f0"><text x="-5.51" y="0" font-size="6.4">ø21</text></g><line x1="365.6" y1="427.6" x2="365.6" y2="452.6" stroke="#00f000" stroke-width="1"/><line x1="363.4" y1="429.6" x2="372.4" y2="429.6" stroke="#00f000" stroke-width="1"/><line x1="363.4" y1="440.2" x2="372.4" y2="440.2" stroke="#00f000" stroke-width="1"/><line x1="363.4" y1="451.2" x2="372.4" y2="451.2" stroke="#00f000" stroke-width="1"/><g transform="translate(364.00,434.80) rotate(-90) scale(0.72,1)" fill="#f0f0f0"><text x="-3.89" y="0" font-size="7">30</text></g><g transform="translate(364.00,445.80) rotate(-90) scale(0.72,1)" fill="#f0f0f0"><text x="-3.89" y="0" font-size="7">30</text></g><line x1="373.2" y1="452.4" x2="373.2" y2="464.4" stroke="#00f000" stroke-width="1"/><line x1="384.6" y1="452.4" x2="384.6" y2="464.4" stroke="#00f000" stroke-width="1"/><line x1="431" y1="452.4" x2="431" y2="464.4" stroke="#00f000" stroke-width="1"/><line x1="371.6" y1="462.6" x2="432.6" y2="462.6" stroke="#00f000" stroke-width="1"/><g transform="translate(379.20,461.20) scale(0.72,1)" fill="#f0f0f0"><text x="-3.89" y="0" font-size="7">30</text></g><g transform="translate(408.60,461.20) scale(0.72,1)" fill="#f0f0f0"><text x="-5.84" y="0" font-size="7">111</text></g><g transform="translate(624.00,96.40) scale(0.8,1)" fill="#f0f0f0"><text x="-7.41" y="0" font-size="11.6">N5</text></g><g transform="translate(637.00,95.60) scale(0.82,1)" fill="#f0f0f0"><text x="-7.8" y="0" font-size="7.8" stroke="#f0f0f0" stroke-width="0.3">大样</text></g><line x1="610.2" y1="98.2" x2="648" y2="98.2" stroke="#a80808" stroke-width="1"/><line x1="610.2" y1="99.9" x2="648" y2="99.9" stroke="#00f000" stroke-width="1.4"/><line x1="555.2" y1="122.7" x2="698.4" y2="122.7" stroke="#b4a400" stroke-width="1.3"/><line x1="555.2" y1="129.4" x2="698.4" y2="129.4" stroke="#b4a400" stroke-width="1.3"/><rect x="553.6" y="122.2" width="1.7" height="7.8" stroke="#e8e8e8" stroke-width="0.8" fill="none"/><rect x="698.2" y="122.2" width="1.8" height="7.8" stroke="#e8e8e8" stroke-width="0.8" fill="none"/><line x1="555.3" y1="98.8" x2="555.3" y2="121.8" stroke="#00f000" stroke-width="1.1"/><line x1="555.3" y1="132.4" x2="555.3" y2="152.8" stroke="#00f000" stroke-width="1.1"/><line x1="548" y1="121.4" x2="548" y2="131.4" stroke="#00f000" stroke-width="1"/><line x1="545.6" y1="121.3" x2="551.4" y2="121.3" stroke="#00f000" stroke-width="1"/><line x1="545.6" y1="131.2" x2="551.4" y2="131.2" stroke="#00f000" stroke-width="1"/><g transform="translate(545.20,126.20) rotate(-90) scale(0.72,1)" fill="#f0f0f0"><text x="-4.00" y="0" font-size="7.2">25</text></g><g transform="translate(549.20,113.60) scale(0.68,1)" fill="#f0f0f0"><text x="-7.82" y="0" font-size="7.4">R2.5</text></g><path d="M545.6,114.6 L552.4,114.6 L553.8,118.4" stroke="#00f000" stroke-width="0.9" fill="none"/><g transform="translate(562.20,118.20) scale(0.68,1)" fill="#f0f0f0"><text x="-7.82" y="0" font-size="7.4">R0.5</text></g><line x1="556.2" y1="119.4" x2="565" y2="119.4" stroke="#00f000" stroke-width="0.9"/><g transform="translate(562.60,104.60) rotate(-62) scale(0.72,1)" fill="#f0f0f0"><text x="-5.28" y="0" font-size="7.6">6.3</text></g><path d="M557.4,104.2 L564.6,110.6 L561.2,99" stroke="#e0e0e0" stroke-width="0.8" fill="none"/><g transform="translate(549.20,141.00) scale(0.72,1)" fill="#f0f0f0"><text x="-4.00" y="0" font-size="7.2">10</text></g><rect x="552.2" y="140.6" width="1.4" height="1.4" fill="#30a0e0"/><line x1="557.6" y1="141.5" x2="694" y2="141.5" stroke="#00f000" stroke-width="1.1"/><line x1="555.3" y1="151" x2="699.4" y2="151" stroke="#00f000" stroke-width="1.1"/><g transform="translate(626.00,140.40) scale(0.74,1)" fill="#f0f0f0"><text x="-6.84" y="0" font-size="8.2">365</text></g><g transform="translate(628.40,150.00) scale(0.74,1)" fill="#f0f0f0"><text x="-6.17" y="0" font-size="7.4">380</text></g><line x1="694" y1="130.4" x2="694" y2="143" stroke="#00f000" stroke-width="1"/><line x1="699.4" y1="130.6" x2="699.4" y2="153.8" stroke="#00f000" stroke-width="1.1"/><rect x="693.3" y="142.2" width="1.4" height="1.4" fill="#30a0e0"/><g transform="translate(688.00,140.40) scale(0.72,1)" fill="#00f000"><text x="-4.00" y="0" font-size="7.2">12</text></g><g transform="translate(706.40,140.20) scale(0.8,1)" fill="#00f000"><text x="-2.06" y="0" font-size="7.4">3</text></g><line x1="702" y1="140.8" x2="708.2" y2="140.8" stroke="#00f000" stroke-width="0.9"/><g transform="translate(629.40,117.40) rotate(-12) scale(0.72,1)" fill="#f0f0f0"><text x="-5.42" y="0" font-size="7.8">6.3</text></g><path d="M626.4,115 L630.4,121 L637.6,110.4" stroke="#e0e0e0" stroke-width="0.8" fill="none"/><g transform="translate(680.80,112.80) scale(0.76,1)" fill="#f0f0f0"><text x="-4.32" y="0" font-size="7.4">ø6</text></g><path d="M675,113.8 L686.8,113.8 L693.8,126.2" stroke="#00f000" stroke-width="1" fill="none"/><rect x="692.8" y="125.4" width="2" height="2" fill="#30d0d0"/><g transform="translate(706.20,117.00) scale(0.7,1)" fill="#f0f0f0"><text x="-5.80" y="0" font-size="7.2">3x3</text></g><path d="M708.8,118 L702,118 L699.4,122" stroke="#00f000" stroke-width="1" fill="none"/><line x1="720.6" y1="116" x2="720.6" y2="135.6" stroke="#00f000" stroke-width="1"/><line x1="702" y1="122.7" x2="723" y2="122.7" stroke="#00f000" stroke-width="1"/><line x1="702" y1="129.4" x2="723" y2="129.4" stroke="#00f000" stroke-width="1"/><g transform="translate(718.80,126.20) rotate(-90) scale(0.72,1)" fill="#f0f0f0"><text x="-4.00" y="0" font-size="7.2">25</text></g><g transform="translate(624.00,182.60) scale(0.8,1)" fill="#f0f0f0"><text x="-7.41" y="0" font-size="11.6">N9</text></g><g transform="translate(637.00,181.80) scale(0.82,1)" fill="#f0f0f0"><text x="-7.8" y="0" font-size="7.8" stroke="#f0f0f0" stroke-width="0.3">大样</text></g><line x1="610.9" y1="184.3" x2="648" y2="184.3" stroke="#a80808" stroke-width="1.1"/><line x1="610.9" y1="186" x2="648" y2="186" stroke="#00f000" stroke-width="1.3"/><path d="M546.8,205 L546.8,200 L718.5,200 L718.5,211.2 L706.2,211.2 L546.8,205" stroke="#c8c8c8" stroke-width="1" fill="none"/><circle cx="712.5" cy="205.4" r="2" stroke="#d8c000" stroke-width="1" fill="none"/><rect x="711.9" y="204.8" width="1.2" height="1.2" fill="#30d0d0"/><rect x="546.1" y="199.3" width="1.4" height="1.4" fill="#30d0d0"/><rect x="546.1" y="204.3" width="1.4" height="1.4" fill="#30d0d0"/><rect x="717.8" y="199.3" width="1.4" height="1.4" fill="#30d0d0"/><rect x="717.8" y="210.5" width="1.4" height="1.4" fill="#30d0d0"/><rect x="705.5" y="210.5" width="1.4" height="1.4" fill="#30d0d0"/><line x1="539" y1="193.8" x2="539" y2="198.6" stroke="#00f000" stroke-width="0.9"/><line x1="539" y1="206.8" x2="539" y2="211.4" stroke="#00f000" stroke-width="0.9"/><line x1="536" y1="200" x2="544.6" y2="200" stroke="#00f000" stroke-width="1"/><line x1="536" y1="205.4" x2="544.6" y2="205.4" stroke="#00f000" stroke-width="1"/><g transform="translate(533.60,202.60) rotate(-90) scale(0.75,1)" fill="#f0f0f0"><text x="-3.11" y="0" font-size="5.6">30</text></g><line x1="546.8" y1="229.7" x2="718.5" y2="229.7" stroke="#00f000" stroke-width="1.1"/><line x1="546.8" y1="206" x2="546.8" y2="232" stroke="#00f000" stroke-width="1.1"/><line x1="718.5" y1="213" x2="718.5" y2="232" stroke="#00f000" stroke-width="1.1"/><g transform="translate(634.40,229.00) scale(0.76,1)" fill="#f0f0f0"><text x="-6.51" y="0" font-size="7.8">774</text></g><g transform="translate(688.20,189.80) rotate(-10) scale(0.72,1)" fill="#f0f0f0"><text x="-5.84" y="0" font-size="8.4">6.3</text></g><path d="M686.4,189.4 L689.6,193 L696.6,183" stroke="#e0e0e0" stroke-width="0.8" fill="none"/><g transform="translate(700.40,191.80) scale(0.74,1)" fill="#f0f0f0"><text x="-5.34" y="0" font-size="6.2">ø21</text></g><path d="M684,193.4 L705.6,193.4 L712.2,205" stroke="#00f000" stroke-width="1" fill="none"/><g transform="translate(717.00,189.20) scale(0.72,1)" fill="#f0f0f0"><text x="-4.23" y="0" font-size="7.6">30</text></g><line x1="706.2" y1="192.5" x2="711" y2="192.5" stroke="#00f000" stroke-width="1"/><line x1="718.1" y1="192.5" x2="725" y2="192.5" stroke="#00f000" stroke-width="1"/><line x1="712.5" y1="190" x2="712.5" y2="200" stroke="#00f000" stroke-width="1"/><line x1="718.1" y1="190" x2="718.1" y2="200" stroke="#00f000" stroke-width="1"/><line x1="732.2" y1="199.4" x2="732.2" y2="212" stroke="#00f000" stroke-width="1"/><line x1="721.2" y1="200" x2="734.4" y2="200" stroke="#00f000" stroke-width="1"/><line x1="721.2" y1="211.2" x2="734.4" y2="211.2" stroke="#00f000" stroke-width="1"/><g transform="translate(730.40,205.60) rotate(-90) scale(0.72,1)" fill="#f0f0f0"><text x="-4.12" y="0" font-size="7.4">60</text></g><line x1="706.2" y1="213" x2="706.2" y2="225.6" stroke="#00f000" stroke-width="1"/><line x1="706.2" y1="222.9" x2="718.5" y2="222.9" stroke="#00f000" stroke-width="1"/><g transform="translate(713.60,222.20) scale(0.74,1)" fill="#f0f0f0"><text x="-4.34" y="0" font-size="7.8">60</text></g><g transform="translate(703.20,204.60) scale(0.8,1)" fill="#00f000"><text x="-1.28" y="0" font-size="4.6">5</text></g><line x1="701.4" y1="205.4" x2="707.4" y2="205.4" stroke="#00f000" stroke-width="0.8"/><g transform="translate(698.40,216.20) rotate(-20) scale(0.75,1)" fill="#f0f0f0"><text x="-3.87" y="0" font-size="4.8">3x6</text></g><line x1="701" y1="211.6" x2="703.6" y2="216" stroke="#00f000" stroke-width="0.8"/><g transform="translate(621.40,268.20) scale(0.8,1)" fill="#f0f0f0"><text x="-38" y="0" font-size="7.6" stroke="#f0f0f0" stroke-width="0.3">一个水密门材料明细表</text></g><line x1="549" y1="281.7" x2="707" y2="281.7" stroke="#00f000" stroke-width="1"/><line x1="549" y1="291.75" x2="707" y2="291.75" stroke="#00f000" stroke-width="1"/><line x1="549" y1="301.8" x2="707" y2="301.8" stroke="#00f000" stroke-width="1"/><line x1="549" y1="311.7" x2="707" y2="311.7" stroke="#00f000" stroke-width="1"/><line x1="549" y1="321.75" x2="707" y2="321.75" stroke="#00f000" stroke-width="1"/><line x1="549" y1="331.8" x2="707" y2="331.8" stroke="#00f000" stroke-width="1"/><line x1="549" y1="341" x2="707" y2="341" stroke="#00f000" stroke-width="1"/><line x1="549" y1="350.5" x2="707" y2="350.5" stroke="#00f000" stroke-width="1"/><line x1="549" y1="360.5" x2="707" y2="360.5" stroke="#00f000" stroke-width="1"/><line x1="549" y1="370.5" x2="707" y2="370.5" stroke="#00f000" stroke-width="1"/><line x1="549" y1="380.3" x2="707" y2="380.3" stroke="#00f000" stroke-width="1"/><line x1="549" y1="390.2" x2="707" y2="390.2" stroke="#00f000" stroke-width="1"/><line x1="549" y1="399.8" x2="707" y2="399.8" stroke="#00f000" stroke-width="1"/><line x1="568.3" y1="271.8" x2="568.3" y2="370.5" stroke="#00f000" stroke-width="1"/><line x1="568.3" y1="399.8" x2="568.3" y2="409.6" stroke="#00f000" stroke-width="1"/><line x1="617.5" y1="271.8" x2="617.5" y2="370.5" stroke="#00f000" stroke-width="1"/><line x1="617.5" y1="399.8" x2="617.5" y2="409.6" stroke="#00f000" stroke-width="1"/><line x1="653.4" y1="271.8" x2="653.4" y2="370.5" stroke="#00f000" stroke-width="1"/><line x1="653.4" y1="399.8" x2="653.4" y2="409.6" stroke="#00f000" stroke-width="1"/><line x1="675.6" y1="271.8" x2="675.6" y2="409.6" stroke="#00f000" stroke-width="1"/><rect x="549" y="271.8" width="158" height="137.8" stroke="#e00000" stroke-width="1.2" fill="none"/><g transform="translate(558.65,279.20) scale(0.8,1)" fill="#f0f0f0"><text x="-6.61" y="0" font-size="5.8" stroke="#f0f0f0" stroke-width="0.3">编</text><text x="-0.81" y="0" font-size="5.8">&#160;</text><text x="0.81" y="0" font-size="5.8" stroke="#f0f0f0" stroke-width="0.3">号</text></g><g transform="translate(592.90,279.20) scale(0.72,1)" fill="#f0f0f0"><text x="-15.58" y="0" font-size="5.92" stroke="#f0f0f0" stroke-width="0.3">规</text><text x="-9.66" y="0" font-size="7.4">&#160;</text><text x="-7.6" y="0" font-size="5.92" stroke="#f0f0f0" stroke-width="0.3">格</text><text x="-1.68" y="0" font-size="7.4">(mm)</text></g><g transform="translate(635.45,279.20) scale(0.72,1)" fill="#f0f0f0"><text x="-15.25" y="0" font-size="5.92" stroke="#f0f0f0" stroke-width="0.3">单件重</text><text x="2.51" y="0" font-size="7.4">(kg)</text></g><g transform="translate(664.50,279.20) scale(0.8,1)" fill="#f0f0f0"><text x="-6.61" y="0" font-size="5.8" stroke="#f0f0f0" stroke-width="0.3">数</text><text x="-0.81" y="0" font-size="5.8">&#160;</text><text x="0.81" y="0" font-size="5.8" stroke="#f0f0f0" stroke-width="0.3">量</text></g><g transform="translate(691.30,279.20) scale(0.72,1)" fill="#f0f0f0"><text x="-13.32" y="0" font-size="5.92" stroke="#f0f0f0" stroke-width="0.3">总</text><text x="-7.40" y="0" font-size="7.4">&#160;</text><text x="-5.34" y="0" font-size="5.92" stroke="#f0f0f0" stroke-width="0.3">重</text><text x="0.58" y="0" font-size="7.4">(kg)</text></g><g transform="translate(558.65,289.45) scale(0.66,1)" fill="#f0f0f0"><text x="-5.11" y="0" font-size="8">N1</text></g><rect x="571.9" y="285.85" width="2.4" height="3.2" stroke="#e8e8e8" stroke-width="0.7" fill="none"/><g transform="translate(575.00,289.45) scale(0.717595,1)" fill="#f0f0f0"><text x="0.00" y="0" font-size="8">35X10X3040</text></g><g transform="translate(637.05,289.45) scale(0.74,1)" fill="#f0f0f0"><text x="-7.98" y="0" font-size="8.2">8.35</text></g><g transform="translate(664.50,289.45) scale(0.74,1)" fill="#f0f0f0"><text x="-2.28" y="0" font-size="8.2">1</text></g><g transform="translate(691.90,289.45) scale(0.74,1)" fill="#f0f0f0"><text x="-7.98" y="0" font-size="8.2">8.35</text></g><g transform="translate(558.65,299.50) scale(0.66,1)" fill="#f0f0f0"><text x="-5.11" y="0" font-size="8">N2</text></g><rect x="571.9" y="295.9" width="2.4" height="3.2" stroke="#e8e8e8" stroke-width="0.7" fill="none"/><g transform="translate(575.00,299.50) scale(0.73921,1)" fill="#f0f0f0"><text x="0.00" y="0" font-size="8">35X10X3467</text></g><g transform="translate(637.05,299.50) scale(0.74,1)" fill="#f0f0f0"><text x="-7.98" y="0" font-size="8.2">9.53</text></g><g transform="translate(664.50,299.50) scale(0.74,1)" fill="#f0f0f0"><text x="-2.28" y="0" font-size="8.2">1</text></g><g transform="translate(691.90,299.50) scale(0.74,1)" fill="#f0f0f0"><text x="-7.98" y="0" font-size="8.2">9.53</text></g><g transform="translate(558.65,309.40) scale(0.66,1)" fill="#f0f0f0"><text x="-5.11" y="0" font-size="8">N3</text></g><rect x="571.9" y="305.8" width="2.4" height="3.2" stroke="#e8e8e8" stroke-width="0.7" fill="none"/><g transform="translate(575.00,309.40) scale(0.75434,1)" fill="#f0f0f0"><text x="0.00" y="0" font-size="8">698X6X1398</text></g><g transform="translate(637.05,309.40) scale(0.74,1)" fill="#f0f0f0"><text x="-10.26" y="0" font-size="8.2">45.96</text></g><g transform="translate(664.50,309.40) scale(0.74,1)" fill="#f0f0f0"><text x="-2.28" y="0" font-size="8.2">1</text></g><g transform="translate(691.90,309.40) scale(0.74,1)" fill="#f0f0f0"><text x="-10.26" y="0" font-size="8.2">45.96</text></g><g transform="translate(558.65,319.45) scale(0.66,1)" fill="#f0f0f0"><text x="-5.11" y="0" font-size="8">N4</text></g><rect x="571.9" y="315.85" width="2.4" height="3.2" stroke="#e8e8e8" stroke-width="0.7" fill="none"/><g transform="translate(575.00,319.45) scale(0.710248,1)" fill="#f0f0f0"><text x="0.00" y="0" font-size="8">60X20X141</text></g><g transform="translate(637.05,319.45) scale(0.74,1)" fill="#f0f0f0"><text x="-7.98" y="0" font-size="8.2">1.33</text></g><g transform="translate(664.50,319.45) scale(0.74,1)" fill="#f0f0f0"><text x="-2.28" y="0" font-size="8.2">2</text></g><g transform="translate(691.90,319.45) scale(0.74,1)" fill="#f0f0f0"><text x="-7.98" y="0" font-size="8.2">2.66</text></g><g transform="translate(558.65,329.50) scale(0.66,1)" fill="#f0f0f0"><text x="-5.11" y="0" font-size="8">N5</text></g><g transform="translate(571.70,329.50) scale(0.749268,1)" fill="#f0f0f0"><text x="0.00" y="0" font-size="8">L20X380</text></g><g transform="translate(637.05,329.50) scale(0.74,1)" fill="#f0f0f0"><text x="-7.98" y="0" font-size="8.2">0.94</text></g><g transform="translate(664.50,329.50) scale(0.74,1)" fill="#f0f0f0"><text x="-2.28" y="0" font-size="8.2">2</text></g><g transform="translate(691.90,329.50) scale(0.74,1)" fill="#f0f0f0"><text x="-7.98" y="0" font-size="8.2">0.94</text></g><g transform="translate(558.65,338.70) scale(0.66,1)" fill="#f0f0f0"><text x="-5.11" y="0" font-size="8">N6</text></g><rect x="571.9" y="335.1" width="2.4" height="3.2" stroke="#e8e8e8" stroke-width="0.7" fill="none"/><g transform="translate(575.00,338.70) scale(0.66356,1)" fill="#f0f0f0"><text x="0.00" y="0" font-size="8">100X12X120</text></g><g transform="translate(637.05,338.70) scale(0.74,1)" fill="#f0f0f0"><text x="-7.98" y="0" font-size="8.2">1.13</text></g><g transform="translate(664.50,338.70) scale(0.74,1)" fill="#f0f0f0"><text x="-2.28" y="0" font-size="8.2">2</text></g><g transform="translate(691.90,338.70) scale(0.74,1)" fill="#f0f0f0"><text x="-7.98" y="0" font-size="8.2">2.26</text></g><g transform="translate(558.65,348.20) scale(0.66,1)" fill="#f0f0f0"><text x="-5.11" y="0" font-size="8">N7</text></g><g transform="translate(571.70,348.20) scale(0.724739,1)" fill="#f0f0f0"><text x="0.00" y="0" font-size="8">GB9L-B6&#160;5X50</text></g><g transform="translate(664.50,348.20) scale(0.74,1)" fill="#f0f0f0"><text x="-2.28" y="0" font-size="8.2">1</text></g><g transform="translate(558.65,358.20) scale(0.66,1)" fill="#f0f0f0"><text x="-5.11" y="0" font-size="8">N9</text></g><rect x="571.9" y="354.6" width="2.4" height="3.2" stroke="#e8e8e8" stroke-width="0.7" fill="none"/><g transform="translate(575.00,358.20) scale(0.710248,1)" fill="#f0f0f0"><text x="0.00" y="0" font-size="8">60X10X774</text></g><g transform="translate(637.05,358.20) scale(0.74,1)" fill="#f0f0f0"><text x="-7.98" y="0" font-size="8.2">3.65</text></g><g transform="translate(664.50,358.20) scale(0.74,1)" fill="#f0f0f0"><text x="-2.28" y="0" font-size="8.2">2</text></g><g transform="translate(691.90,358.20) scale(0.74,1)" fill="#f0f0f0"><text x="-7.98" y="0" font-size="8.2">7.30</text></g><g transform="translate(558.65,368.20) scale(0.56,1)" fill="#f0f0f0"><text x="-7.34" y="0" font-size="8">N10</text></g><g transform="translate(571.70,368.20) scale(0.765922,1)" fill="#f0f0f0"><text x="0" y="0" font-size="6.08" stroke="#f0f0f0" stroke-width="0.25">螺栓</text><text x="12.16" y="0" font-size="8">GB97&#160;21</text></g><g transform="translate(664.50,368.20) scale(0.74,1)" fill="#f0f0f0"><text x="-2.28" y="0" font-size="8.2">1</text></g><g transform="translate(616.20,378.00) scale(0.8,1)" fill="#f0f0f0"><text x="-13.09" y="0" font-size="6.2" stroke="#f0f0f0" stroke-width="0.3">合</text><text x="-6.89" y="0" font-size="6.2">&#160;&#160;&#160;&#160;&#160;&#160;&#160;&#160;</text><text x="6.89" y="0" font-size="6.2" stroke="#f0f0f0" stroke-width="0.3">计</text></g><g transform="translate(691.90,378.00) scale(0.74,1)" fill="#f0f0f0"><text x="-10.26" y="0" font-size="8.2">77.00</text></g><g transform="translate(605.60,387.90) scale(0.74,1)" fill="#f0f0f0"><text x="0" y="0" font-size="6.2" stroke="#f0f0f0" stroke-width="0.3">焊缝</text></g><g transform="translate(615.60,387.90) scale(0.72,1)" fill="#f0f0f0"><text x="0.00" y="0" font-size="8">1.5%</text></g><g transform="translate(691.90,387.90) scale(0.74,1)" fill="#f0f0f0"><text x="-7.98" y="0" font-size="8.2">1.16</text></g><g transform="translate(616.20,397.50) scale(0.8,1)" fill="#f0f0f0"><text x="-13.09" y="0" font-size="6.2" stroke="#f0f0f0" stroke-width="0.3">总</text><text x="-6.89" y="0" font-size="6.2">&#160;&#160;&#160;&#160;&#160;&#160;&#160;&#160;</text><text x="6.89" y="0" font-size="6.2" stroke="#f0f0f0" stroke-width="0.3">计</text></g><g transform="translate(691.90,397.50) scale(0.74,1)" fill="#f0f0f0"><text x="-10.26" y="0" font-size="8.2">78.16</text></g><g transform="translate(558.65,407.30) scale(0.66,1)" fill="#f0f0f0"><text x="-5.11" y="0" font-size="8">N8</text></g><g transform="translate(571.70,407.30) scale(0.72536,1)" fill="#f0f0f0"><text x="0" y="0" font-size="6.08" stroke="#f0f0f0" stroke-width="0.25">橡胶止水</text><text x="24.32" y="0" font-size="8">60X30X3254</text></g><g transform="translate(637.05,407.30) scale(0.74,1)" fill="#f0f0f0"><text x="-7.98" y="0" font-size="8.2">5.49</text></g><g transform="translate(664.50,407.30) scale(0.74,1)" fill="#f0f0f0"><text x="-2.28" y="0" font-size="8.2">1</text></g><g transform="translate(691.90,407.30) scale(0.74,1)" fill="#f0f0f0"><text x="-7.98" y="0" font-size="8.2">5.49</text></g><g transform="translate(573.30,446.00) scale(0.8,1)" fill="#f0f0f0"><text x="-3.5" y="0" font-size="7" stroke="#f0f0f0" stroke-width="0.3">注</text></g><g transform="translate(576.00,456.40) scale(0.7,1)" fill="#f0f0f0"><text x="0.00" y="0" font-size="8">1.</text></g><g transform="translate(582.80,456.20) scale(0.703125,1)" fill="#f0f0f0"><text x="0" y="0" font-size="6.4" stroke="#f0f0f0" stroke-width="0.28">本图尺寸均以毫米为单位</text></g><g transform="translate(576.00,467.60) scale(0.7,1)" fill="#f0f0f0"><text x="0.00" y="0" font-size="8">2.</text></g><g transform="translate(582.80,467.40) scale(0.725912,1)" fill="#f0f0f0"><text x="0" y="0" font-size="6.4" stroke="#f0f0f0" stroke-width="0.28">门上</text><text x="12.79" y="0" font-size="7.8">N6</text><text x="22.76" y="0" font-size="6.4" stroke="#f0f0f0" stroke-width="0.28">处取一个单手门锁</text><text x="73.93" y="0" font-size="7.8">,&#160;</text><text x="78.27" y="0" font-size="6.4" stroke="#f0f0f0" stroke-width="0.28">锁头侧做成人孔构造</text></g><g transform="translate(575.00,477.40) scale(0.669144,1)" fill="#f0f0f0"><text x="0" y="0" font-size="6.4" stroke="#f0f0f0" stroke-width="0.28">上下有螺头及把手孔</text><text x="57.60" y="0" font-size="6.4">,&#160;</text><text x="61.16" y="0" font-size="6.4" stroke="#f0f0f0" stroke-width="0.28">门底上取一把尺</text></g><path d="M669.2,71.3 L669.2,84.2 L737.6,84.2" stroke="#e00000" stroke-width="1.1" fill="none"/><line x1="703.4" y1="71.3" x2="703.4" y2="84.2" stroke="#e00000" stroke-width="1.1"/><g transform="translate(687.00,81.00) scale(0.72,1)" fill="#f0f0f0"><text x="-13.9" y="0" font-size="8.11" stroke="#f0f0f0" stroke-width="0.3">第</text><text x="-5.78" y="0" font-size="10.4">96</text><text x="5.78" y="0" font-size="8.11" stroke="#f0f0f0" stroke-width="0.3">页</text></g><g transform="translate(720.80,81.00) scale(0.72,1)" fill="#f0f0f0"><text x="-13.9" y="0" font-size="8.11" stroke="#f0f0f0" stroke-width="0.3">共</text><text x="-5.78" y="0" font-size="10.4">99</text><text x="5.78" y="0" font-size="8.11" stroke="#f0f0f0" stroke-width="0.3">页</text></g><path d="M11.8,77 L12.9,77 L15.3,86.5 L7.6,90.4 Z" stroke="none" stroke-width="0" fill="#0aa9a2"/><path d="M9.4,93.5 L15.9,90.2 L17,93.5 Z" stroke="none" stroke-width="0" fill="#0aa9a2"/><path d="M13.4,70 L14.6,68.3 L21.4,68.3 L26,80.2 L16.8,84.8 L13.2,72.6 Z" stroke="none" stroke-width="0" fill="#0aa9a2"/><path d="M17.8,88.8 L26.7,84.1 L29.2,93.5 L19.3,93.5 Z" stroke="none" stroke-width="0" fill="#0aa9a2"/><path d="M26.2,69.6 L27.2,68.3 L34.8,68.3 L36.4,74.1 L28.2,78.8 L25.8,72 Z" stroke="none" stroke-width="0" fill="#0aa9a2"/><path d="M28.5,82.7 L37.1,77.3 L41.4,90.6 L41.4,93.5 L31.4,93.5 Z" stroke="none" stroke-width="0" fill="#0aa9a2"/><line x1="41.4" y1="60" x2="41.4" y2="104" stroke="#00f000" stroke-width="1.1"/><g transform="translate(48.20,89.80)" fill="#f6f6f6" stroke="#f6f6f6" stroke-width="0.25"><text x="0.00" y="0" font-size="13.3">smm.dwg</text></g><defs><radialGradient id="av" cx="50%" cy="55%" r="55%"><stop offset="0" stop-color="#e4dcdc"/><stop offset="0.45" stop-color="#f4eeee"/><stop offset="1" stop-color="#ffffff"/></radialGradient></defs><circle cx="689.2" cy="85.6" r="8.3" stroke="none" stroke-width="0" fill="url(#av)"/><g transform="translate(703.60,89.80)" fill="#f4f4f4"><text x="0" y="0" font-size="12.3" stroke="#f4f4f4" stroke-width="0.3">游客</text></g><g transform="translate(743.60,89.80)" fill="#f4f4f4"><text x="0" y="0" font-size="12.3" stroke="#f4f4f4" stroke-width="0.3">登录</text></g><g transform="translate(772.80,89.60)" fill="#f4f4f4"><text x="0.00" y="0" font-size="12.3">&gt;</text></g><rect x="0.5" y="105.5" width="39.4" height="38" stroke="#2c2c2c" stroke-width="1" fill="#121212"/><rect x="8" y="113" width="25.2" height="23.8" fill="#aaaaaa"/><path d="M20.3,114 L32.7,119.4 L20.3,124.6 L8,119.4 Z" stroke="none" stroke-width="0" fill="#000"/><path d="M8,123.6 L20.3,128.1 L32.7,123.6 L32.7,126.1 L20.3,130.5 L8,126.1 Z" stroke="none" stroke-width="0" fill="#000"/><path d="M8,128.6 L20.3,132.9 L32.7,128.6 L32.7,131.1 L20.3,135 L8,131.1 Z" stroke="none" stroke-width="0" fill="#000"/><rect x="338.6" y="460.6" width="118.8" height="38" stroke="#303030" stroke-width="1" fill="#1b1b1b" rx="2" fill-opacity="0.9"/><path d="M355.2,469 L363.2,469 L363.2,478.8 L367.6,478.8 L359.2,486.2 L350.6,478.8 L355.2,478.8 Z" stroke="#555555" stroke-width="1.4" fill="none" stroke-linejoin="round"/><path d="M347.2,483.2 L347.2,490 L371.4,490 L371.4,483.2" stroke="#555555" stroke-width="1.4" fill="none"/><path d="M398.40,469.20 L401.93,476.35 L409.81,477.49 L404.11,483.05 L405.45,490.91 L398.40,487.20 L391.35,490.91 L392.69,483.05 L386.99,477.49 L394.87,476.35 Z" stroke="#555555" stroke-width="1.7" fill="none" stroke-linejoin="round"/><rect x="425.6" y="468.6" width="10.4" height="10.4" stroke="#555555" stroke-width="1.3" fill="none"/><rect x="429" y="472" width="3.6" height="3.6" fill="#555555"/><rect x="438.6" y="468.6" width="10.4" height="10.4" stroke="#555555" stroke-width="1.3" fill="none"/><rect x="442" y="472" width="3.6" height="3.6" fill="#555555"/><rect x="425.6" y="481.4" width="10.4" height="10.4" stroke="#555555" stroke-width="1.3" fill="none"/><rect x="429" y="484.8" width="3.6" height="3.6" fill="#555555"/><path d="M438.2,481.2 L441.6,481.2 L441.6,486 L444.6,486 L444.6,481.2 L449.6,481.2 L449.6,487.6 L438.2,487.6 Z" stroke="none" stroke-width="0" fill="#555555"/><rect x="438.2" y="487.6" width="3.2" height="3.8" fill="#555555"/><rect x="444.6" y="489.6" width="1.8" height="1.8" fill="#555555"/><rect x="448" y="489.6" width="1.8" height="1.8" fill="#555555"/><g transform="translate(590.40,518.20)" fill="#b4b4b4" opacity="0.92"><text x="0" y="0" font-size="9.75">该图纸是网上用户</text></g><g transform="translate(668.60,518.20)" fill="#b4b4b4" opacity="0.92"><text x="1.5" y="0" font-size="9.75">“</text></g><g transform="translate(678.80,518.20)" fill="#b4b4b4" opacity="0.92"><text x="0" y="0" font-size="9.75">那一抹淡浅忆</text></g><g fill="#b4b4b4" opacity="0.92"><text x="733.6" y="518.2" font-size="9.75">”</text></g><g transform="translate(749.20,518.20)" fill="#b4b4b4" opacity="0.92"><text x="0" y="0" font-size="9.75">上传，如有</text></g><g transform="translate(590.40,531.80)" fill="#b4b4b4" opacity="0.92"><text x="0" y="0" font-size="9.75">侵权你的权益，请联系我们客服及时删除。</text></g><rect x="0" y="532.4" width="800" height="0.6" fill="#2a2a2a"/>
</svg>
</body></html>
